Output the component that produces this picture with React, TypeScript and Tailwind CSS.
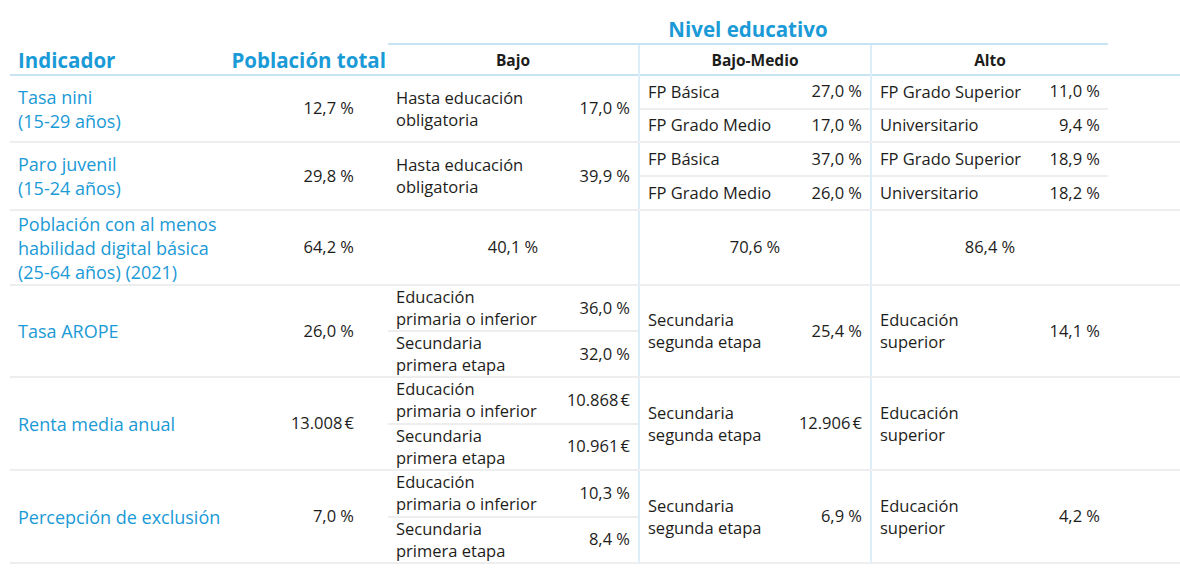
import React from "react";

type Sub = { label?: string[]; value?: string };
type Cell = { single?: string; subs?: Sub[]; label?: string[]; value?: string };
type Row = {
  indicator: string[];
  total: string;
  h: string;
  bajo: Cell;
  medio: Cell;
  alto: Cell;
};

const rows: Row[] = [
  {
    indicator: ["Tasa nini", "(15-29 años)"],
    total: "12,7 %",
    h: "h-[67px]",
    bajo: { label: ["Hasta educación", "obligatoria"], value: "17,0 %" },
    medio: {
      subs: [
        { label: ["FP Básica"], value: "27,0 %" },
        { label: ["FP Grado Medio"], value: "17,0 %" },
      ],
    },
    alto: {
      subs: [
        { label: ["FP Grado Superior"], value: "11,0 %" },
        { label: ["Universitario"], value: "9,4 %" },
      ],
    },
  },
  {
    indicator: ["Paro juvenil", "(15-24 años)"],
    total: "29,8 %",
    h: "h-[68px]",
    bajo: { label: ["Hasta educación", "obligatoria"], value: "39,9 %" },
    medio: {
      subs: [
        { label: ["FP Básica"], value: "37,0 %" },
        { label: ["FP Grado Medio"], value: "26,0 %" },
      ],
    },
    alto: {
      subs: [
        { label: ["FP Grado Superior"], value: "18,9 %" },
        { label: ["Universitario"], value: "18,2 %" },
      ],
    },
  },
  {
    indicator: ["Población con al menos", "habilidad digital básica", "(25-64 años) (2021)"],
    total: "64,2 %",
    h: "h-[75px]",
    bajo: { single: "40,1 %" },
    medio: { single: "70,6 %" },
    alto: { single: "86,4 %" },
  },
  {
    indicator: ["Tasa AROPE"],
    total: "26,0 %",
    h: "h-[92px]",
    bajo: {
      subs: [
        { label: ["Educación", "primaria o inferior"], value: "36,0 %" },
        { label: ["Secundaria", "primera etapa"], value: "32,0 %" },
      ],
    },
    medio: { label: ["Secundaria", "segunda etapa"], value: "25,4 %" },
    alto: { label: ["Educación", "superior"], value: "14,1 %" },
  },
  {
    indicator: ["Renta media anual"],
    total: "13.008\u202f€",
    h: "h-[93px]",
    bajo: {
      subs: [
        { label: ["Educación", "primaria o inferior"], value: "10.868\u202f€" },
        { label: ["Secundaria", "primera etapa"], value: "10.961\u202f€" },
      ],
    },
    medio: { label: ["Secundaria", "segunda etapa"], value: "12.906\u202f€" },
    alto: { label: ["Educación", "superior"] },
  },
  {
    indicator: ["Percepción de exclusión"],
    total: "7,0 %",
    h: "h-[93px]",
    bajo: {
      subs: [
        { label: ["Educación", "primaria o inferior"], value: "10,3 %" },
        { label: ["Secundaria", "primera etapa"], value: "8,4 %" },
      ],
    },
    medio: { label: ["Secundaria", "segunda etapa"], value: "6,9 %" },
    alto: { label: ["Educación", "superior"], value: "4,2 %" },
  },
];

function LabelValue({ label, value }: { label?: string[]; value?: string }) {
  return (
    <div className="flex flex-1 items-center justify-between pl-2 pr-2">
      <div className="leading-[22px]">
        {label?.map((l) => (
          <div key={l}>{l}</div>
        ))}
      </div>
      {value && <div className="whitespace-nowrap">{value}</div>}
    </div>
  );
}

function LevelCell({ cell, divider }: { cell: Cell; divider?: boolean }) {
  const edge = divider ? "border-l-2 border-[#ddeef8]" : "";
  if (cell.single) {
    return (
      <div className={`flex items-center justify-center ${edge}`}>{cell.single}</div>
    );
  }
  if (cell.subs) {
    return (
      <div className={`flex flex-col ${edge}`}>
        {cell.subs.map((s, i) => (
          <div
            key={i}
            className={`flex flex-1 ${i > 0 ? "border-t-2 border-[#eeeeee]" : ""}`}
          >
            <LabelValue label={s.label} value={s.value} />
          </div>
        ))}
      </div>
    );
  }
  return (
    <div className={`flex ${edge}`}>
      <LabelValue label={cell.label} value={cell.value} />
    </div>
  );
}

const cols = "grid grid-cols-[210px_168px_250px_232px_238px]";

export default function App() {
  return (
    <div
      className="w-[1180px] h-[575px] bg-white pl-[10px] text-[16.5px] text-[#1d1d1b]"
      style={{ fontFamily: '"Open Sans", "Noto Sans", sans-serif' }}
    >
      <div className={cols}>
        <div className="col-start-3 col-span-3 h-[45px] border-b-2 border-[#c6e4f3] flex items-end justify-center text-[20.5px] font-bold text-[#1a9ad6] leading-[28px]">
          Nivel educativo
        </div>
      </div>

      <div className={`${cols} h-[31px] border-b-2 border-[#c6e4f3]`}>
        <div className="flex items-center pl-2 text-[20.5px] font-bold text-[#1a9ad6]">
          Indicador
        </div>
        <div className="flex items-center justify-end pr-0.5 text-[20.5px] font-bold text-[#1a9ad6] whitespace-nowrap">
          Población total
        </div>
        <div className="flex items-center justify-center text-[15.5px] font-bold">Bajo</div>
        <div className="flex items-center justify-center text-[15.5px] font-bold border-l-2 border-[#ddeef8]">
          Bajo-Medio
        </div>
        <div className="flex items-center justify-center text-[15.5px] font-bold border-l-2 border-[#ddeef8]">
          Alto
        </div>
      </div>

      {rows.map((r, i) => (
        <div key={i} className={`${cols} ${r.h} border-b-2 border-[#eeeeee]`}>
          <div className="flex flex-col justify-center pl-2 text-[18px] leading-[24px] text-[#1a9ad6] whitespace-nowrap">
            {r.indicator.map((l) => (
              <div key={l}>{l}</div>
            ))}
          </div>
          <div className="flex items-center justify-end pr-[34px]">{r.total}</div>
          <LevelCell cell={r.bajo} />
          <LevelCell cell={r.medio} divider />
          <LevelCell cell={r.alto} divider />
        </div>
      ))}
    </div>
  );
}
